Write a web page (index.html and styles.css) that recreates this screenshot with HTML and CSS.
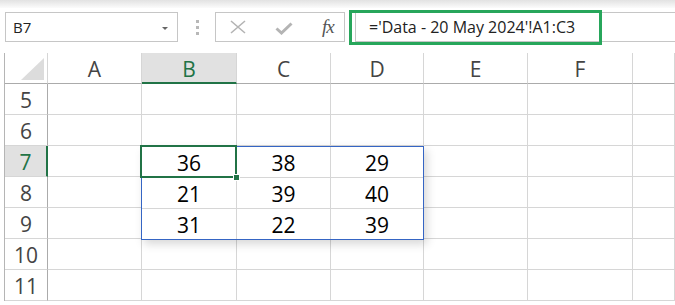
FILE: index.html
```html
<!DOCTYPE html>
<html lang="en">
<head>
  <meta charset="UTF-8">
  <title>Linked picture</title>
  <link rel="stylesheet" href="styles.css">
</head>
<body>
  <div class="ribbon-edge"></div>

  <div class="formula-bar">
    <div class="name-box">
      <span>B7</span>
      <span class="caret"></span>
    </div>
    <div class="grip"><i></i><i></i><i></i></div>
    <div class="fx-box">
      <svg class="ico-cancel" width="16" height="14" viewBox="0 0 16 14">
        <path d="M1 1 L15 13 M15 1 L1 13" stroke="#b4b4b4" stroke-width="1.6" fill="none"/>
      </svg>
      <svg class="ico-enter" width="18" height="13" viewBox="0 0 18 13">
        <path d="M1.5 6.5 L6.5 11 L16.5 1.5" stroke="#b4b4b4" stroke-width="3" fill="none"/>
      </svg>
      <span class="fx">fx</span>
    </div>
    <div class="formula-input">='Data - 20 May 2024'!A1:C3</div>
    <div class="formula-mark"></div>
  </div>

  <div class="sheet">
    <div class="cell corner"><span class="corner-tri"></span></div>
    <div class="cell col-head">A</div>
    <div class="cell col-head active">B</div>
    <div class="cell col-head">C</div>
    <div class="cell col-head">D</div>
    <div class="cell col-head">E</div>
    <div class="cell col-head">F</div>
    <div class="cell col-head"></div>

    <div class="cell row-head">5</div>
    <div class="cell"></div><div class="cell"></div><div class="cell"></div><div class="cell"></div><div class="cell"></div><div class="cell"></div><div class="cell"></div>

    <div class="cell row-head">6</div>
    <div class="cell"></div><div class="cell"></div><div class="cell"></div><div class="cell"></div><div class="cell"></div><div class="cell"></div><div class="cell"></div>

    <div class="cell row-head active">7</div>
    <div class="cell"></div><div class="cell"></div><div class="cell"></div><div class="cell"></div><div class="cell"></div><div class="cell"></div><div class="cell"></div>

    <div class="cell row-head">8</div>
    <div class="cell"></div><div class="cell"></div><div class="cell"></div><div class="cell"></div><div class="cell"></div><div class="cell"></div><div class="cell"></div>

    <div class="cell row-head">9</div>
    <div class="cell"></div><div class="cell"></div><div class="cell"></div><div class="cell"></div><div class="cell"></div><div class="cell"></div><div class="cell"></div>

    <div class="cell row-head">10</div>
    <div class="cell"></div><div class="cell"></div><div class="cell"></div><div class="cell"></div><div class="cell"></div><div class="cell"></div><div class="cell"></div>

    <div class="cell row-head">11</div>
    <div class="cell"></div><div class="cell"></div><div class="cell"></div><div class="cell"></div><div class="cell"></div><div class="cell"></div><div class="cell"></div>

    <!-- linked picture of Data sheet A1:C3 -->
    <div class="picture">
      <div class="pcell">36</div><div class="pcell">38</div><div class="pcell">29</div>
      <div class="pcell">21</div><div class="pcell">39</div><div class="pcell">40</div>
      <div class="pcell">31</div><div class="pcell">22</div><div class="pcell">39</div>
    </div>

    <div class="selection"><span class="handle"></span></div>
  </div>
</body>
</html>
```

FILE: styles.css
```css
body {
  margin: 0;
  background: #fff;
  font-family: "Open Sans", "Noto Sans", sans-serif;
  color: #444;
  overflow: hidden;
}
.ribbon-edge {
  height: 8px;
  background: linear-gradient(#e2e2e2, #fbfbfb);
}
.formula-bar {
  position: relative;
  display: flex;
  align-items: center;
  height: 30px;
  padding: 4px 0 0 5px;
  margin-bottom: 11px;
}
.name-box {
  display: flex;
  align-items: center;
  justify-content: space-between;
  box-sizing: border-box;
  width: 173px;
  height: 30px;
  padding: 0 9px 0 7px;
  border: 1px solid #c6c6c6;
  font-size: 15px;
  color: #222;
}
.caret {
  width: 0;
  height: 0;
  border-left: 3px solid transparent;
  border-right: 3px solid transparent;
  border-top: 3px solid #666;
  margin-top: 2px;
}
.grip {
  display: flex;
  flex-direction: column;
  gap: 3px;
  margin-left: 18px;
}
.grip i {
  display: block;
  width: 3px;
  height: 3px;
  background: #b8b8b8;
}
.fx-box {
  display: flex;
  align-items: center;
  box-sizing: border-box;
  width: 130px;
  height: 30px;
  margin-left: 16px;
  border: 1px solid #c6c6c6;
}
.ico-cancel {
  margin-left: 14px;
}
.ico-enter {
  margin-left: 29px;
  margin-top: 2px;
}
.fx {
  margin-left: 29px;
  font-family: "Liberation Serif", serif;
  font-style: italic;
  font-size: 19px;
  color: #555;
  letter-spacing: -1px;
}
.formula-input {
  flex: 1;
  display: flex;
  align-items: center;
  box-sizing: border-box;
  height: 30px;
  margin-left: 10px;
  padding-left: 13px;
  border: 1px solid #c6c6c6;
  border-right: none;
  font-size: 16px;
  color: #222;
}
.formula-mark {
  position: absolute;
  left: 349px;
  top: 2px;
  width: 247px;
  height: 29px;
  border: 3px solid #27a65b;
}

.sheet {
  position: relative;
  display: grid;
  grid-template-columns: 43px 94px 95px 94px 93px 104px 105px 1fr;
  grid-auto-rows: 31px;
  margin-left: 4px;
  border-left: 1px solid #b5b5b5;
}
.cell {
  box-sizing: border-box;
  border-right: 1px solid #d6d6d6;
  border-bottom: 1px solid #d6d6d6;
}
.corner {
  position: relative;
  border-right: 1px solid #d6d6d6;
  border-bottom: 1px solid #ababab;
}
.corner-tri {
  position: absolute;
  right: 3px;
  bottom: 3px;
  width: 0;
  height: 0;
  border-left: 23px solid transparent;
  border-bottom: 22px solid #dcdcdc;
}
.col-head {
  display: flex;
  align-items: center;
  justify-content: center;
  padding-top: 1px;
  border-bottom: 1px solid #ababab;
  font-size: 21px;
}
.col-head.active {
  background: #e1e1e1;
  color: #217346;
  border-bottom: 2px solid #217346;
  padding-top: 2px;
}
.row-head {
  display: flex;
  align-items: center;
  justify-content: center;
  padding-top: 1px;
  border-right: 1px solid #ababab;
  font-size: 21px;
}
.row-head.active {
  background: #e1e1e1;
  color: #217346;
  border-right: 2px solid #217346;
}

.picture {
  position: absolute;
  left: 136px;
  top: 93px;
  box-sizing: border-box;
  width: 283px;
  height: 94px;
  display: grid;
  grid-template-columns: 95px 94px 1fr;
  grid-template-rows: 31px 31px 1fr;
  background: #fff;
  border: 1px solid #3565c4;
  box-shadow: 3px 4px 9px rgba(0, 0, 0, 0.16);
}
.pcell {
  display: flex;
  align-items: center;
  justify-content: center;
  padding-top: 2px;
  box-sizing: border-box;
  border-right: 1px solid #d6d6d6;
  border-bottom: 1px solid #d6d6d6;
  font-size: 21px;
  color: #000;
}
.pcell:nth-child(3n) {
  border-right: none;
}
.pcell:nth-child(n+7) {
  border-bottom: none;
}
.selection {
  position: absolute;
  left: 135px;
  top: 92px;
  box-sizing: border-box;
  width: 97px;
  height: 33px;
  border: 2px solid #217346;
}
.handle {
  position: absolute;
  right: -5px;
  bottom: -5px;
  width: 5px;
  height: 5px;
  background: #217346;
  border: 1px solid #fff;
}
```
